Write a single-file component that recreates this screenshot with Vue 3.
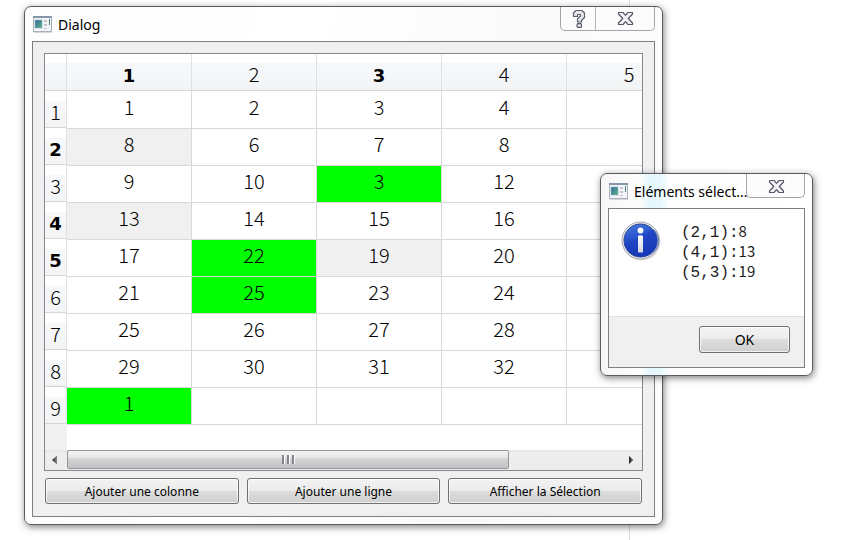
<script setup>
const columns = [
  { label: '1', active: true },
  { label: '2', active: false },
  { label: '3', active: true },
  { label: '4', active: false },
  { label: '5', active: false },
]

const activeRows = [2, 4, 5]
const marked = ['3-3', '5-2', '6-2', '9-1']
const selected = ['2-1', '4-1', '5-3']

const rows = [
  ['1', '2', '3', '4', ''],
  ['8', '6', '7', '8', ''],
  ['9', '10', '3', '12', ''],
  ['13', '14', '15', '16', ''],
  ['17', '22', '19', '20', ''],
  ['21', '25', '23', '24', ''],
  ['25', '26', '27', '28', ''],
  ['29', '30', '31', '32', ''],
  ['1', '', '', '', ''],
]

const picks = [
  { at: '(2,1):', value: '8' },
  { at: '(4,1):', value: '13' },
  { at: '(5,3):', value: '19' },
]

function cellClass(r, c) {
  const key = `${r + 1}-${c + 1}`
  return { marked: marked.includes(key), selected: selected.includes(key) }
}
</script>

<template>
  <main class="desktop">
    <section class="window main-window" aria-labelledby="main-title">
      <header class="titlebar">
        <svg class="app-icon" viewBox="0 0 19 17" aria-hidden="true">
          <rect x="0.5" y="0.5" width="18" height="15" fill="#f4f6f9" stroke="#a9b0bb" />
          <path d="M0 1h19" stroke="#8795ab" stroke-width="2" />
          <rect x="2" y="4" width="7" height="8" fill="url(#screen-a)" stroke="#8fb0c0" stroke-width="0.6" />
          <path d="M11 4h3v2h-3zM11 8h3v2h-3zM11 12h3v1h-3z" fill="#c2c4c8" />
          <path d="M16.5 3v6" stroke="#3f8a78" />
          <path d="M1 16.5h18" stroke="#d5d7da" />
          <defs>
            <linearGradient id="screen-a" x1="0" y1="0" x2="1" y2="1">
              <stop offset="0" stop-color="#35679b" />
              <stop offset="1" stop-color="#58b489" />
            </linearGradient>
          </defs>
        </svg>
        <h1 id="main-title" class="title">Dialog</h1>
        <div class="caption-buttons">
          <button type="button" class="caption help" aria-label="?">
            <svg viewBox="0 0 14 20" width="14" height="20" aria-hidden="true">
              <path d="M1.500 7.500V4L4 1.500h6L12.500 4v4.500L9.500 11.500V13h-4V9.800L8.500 7V5.500h-3v2z" fill="#e6e6e8" stroke="#5d6072" stroke-width="1.200" stroke-linejoin="round" />
              <rect x="5.100" y="14.600" width="4.400" height="3.800" rx="1" fill="#e6e6e8" stroke="#55586b" stroke-width="1.200" />
            </svg>
          </button>
          <button type="button" class="caption close" aria-label="X">
            <svg viewBox="0 0 17 15" width="17" height="15" aria-hidden="true">
              <path d="M1.500 1.500H6L8.500 4.300 11 1.500h4.500V3L11.300 7.500l4.200 4.500v1.500H11L8.500 10.700 6 13.500H1.500V12l4.200-4.500L1.500 3z" fill="#f1f1f2" stroke="#55586b" stroke-width="1.200" stroke-linejoin="round" />
            </svg>
          </button>
        </div>
      </header>

      <div class="client">
        <div class="grid-frame">
          <div class="viewport">
            <table>
              <colgroup>
                <col class="index-col" />
                <col v-for="col in columns" :key="col.label" class="data-col" />
              </colgroup>
              <thead>
                <tr>
                  <td class="corner"></td>
                  <th v-for="col in columns" :key="col.label" scope="col" :class="{ active: col.active }">{{ col.label }}</th>
                </tr>
              </thead>
              <tbody>
                <tr v-for="(row, r) in rows" :key="r">
                  <th scope="row" :class="{ active: activeRows.includes(r + 1) }">{{ r + 1 }}</th>
                  <td v-for="(cell, c) in row" :key="c" :class="cellClass(r, c)">{{ cell }}</td>
                </tr>
              </tbody>
              <tfoot>
                <tr>
                  <td class="rest-index"></td>
                  <td class="rest" colspan="5"></td>
                </tr>
              </tfoot>
            </table>
          </div>
          <div class="scrollbar">
            <button type="button" class="arrow left" aria-label="◄"><span></span></button>
            <div class="track">
              <div class="thumb"><i></i><i></i><i></i></div>
            </div>
            <button type="button" class="arrow right" aria-label="►"><span></span></button>
          </div>
        </div>
        <div class="actions">
          <button type="button" class="push">Ajouter une colonne</button>
          <button type="button" class="push">Ajouter une ligne</button>
          <button type="button" class="push">Afficher la Sélection</button>
        </div>
      </div>
    </section>

    <section class="window message-window" role="dialog" aria-labelledby="message-title">
      <header class="titlebar">
        <svg class="app-icon" viewBox="0 0 19 17" aria-hidden="true">
          <rect x="0.5" y="0.5" width="18" height="15" fill="#f4f6f9" stroke="#a9b0bb" />
          <path d="M0 1h19" stroke="#8795ab" stroke-width="2" />
          <rect x="2" y="4" width="7" height="8" fill="url(#screen-a)" stroke="#8fb0c0" stroke-width="0.6" />
          <path d="M11 4h3v2h-3zM11 8h3v2h-3zM11 12h3v1h-3z" fill="#c2c4c8" />
          <path d="M16.5 3v6" stroke="#3f8a78" />
          <path d="M1 16.5h18" stroke="#d5d7da" />
        </svg>
        <h2 id="message-title" class="title">Eléments sélect...</h2>
        <div class="caption-buttons">
          <button type="button" class="caption close" aria-label="X">
            <svg viewBox="0 0 17 15" width="17" height="15" aria-hidden="true">
              <path d="M1.500 1.500H6L8.500 4.300 11 1.500h4.500V3L11.300 7.500l4.200 4.500v1.500H11L8.500 10.700 6 13.500H1.500V12l4.200-4.500L1.500 3z" fill="#f1f1f2" stroke="#55586b" stroke-width="1.200" stroke-linejoin="round" />
            </svg>
          </button>
        </div>
      </header>
      <div class="message-client">
        <div class="message">
          <svg class="info" viewBox="0 0 40 40" aria-hidden="true">
            <defs>
              <linearGradient id="ball" x1="0" y1="0" x2="0.300" y2="1">
                <stop offset="0" stop-color="#4a7ae0" />
                <stop offset="0.500" stop-color="#2450cc" />
                <stop offset="1" stop-color="#1536b4" />
              </linearGradient>
              <linearGradient id="stem" x1="0" y1="0" x2="0" y2="1">
                <stop offset="0" stop-color="#ffffff" />
                <stop offset="1" stop-color="#d3d6e2" />
              </linearGradient>
            </defs>
            <circle cx="20.500" cy="20.500" r="19" fill="#000" opacity="0.150" />
            <circle cx="19.500" cy="19.500" r="18.500" fill="#e9eaec" stroke="#a3a6ab" />
            <circle cx="19.500" cy="19.500" r="16.500" fill="url(#ball)" stroke="#2b458f" />
            <path d="M3.500 22C10 21 17 18 22 14s9-6 12-5A16 16 0 0 1 19.500 35.500 16 16 0 0 1 3.500 22z" fill="#1a3cbc" opacity="0.450" />
            <circle cx="19.500" cy="9.500" r="2.900" fill="#fff" />
            <rect x="17" y="14.500" width="5" height="17" rx="0.800" fill="url(#stem)" />
          </svg>
          <ul class="picks">
            <li v-for="pick in picks" :key="pick.at"><span class="at">{{ pick.at }}</span><span class="value">{{ pick.value }}</span></li>
          </ul>
        </div>
        <footer class="message-footer">
          <button type="button" class="push ok">OK</button>
        </footer>
      </div>
    </section>
  </main>
</template>

<style>
body {
  margin: 0;
  background: #fff;
}
</style>

<style scoped>
.desktop {
  position: relative;
  box-sizing: border-box;
  min-height: 100vh;
  padding: 6px 183px 15px 24px;
  overflow: hidden;
  background: #fff;
  color: #000;
  font-family: "Noto Sans", "Open Sans", sans-serif;
}

.desktop::before {
  content: "";
  position: absolute;
  top: 0;
  bottom: 0;
  right: 216px;
  width: 1px;
  background: #dcdcdc;
}

button {
  margin: 0;
  padding: 0;
  font-family: inherit;
  color: inherit;
}

.window {
  position: relative;
  box-sizing: border-box;
  padding: 0 7px 7px;
  border: 1px solid #5a5b5d;
  border-radius: 7px;
  background: linear-gradient(100deg, #fdfdfd, #ffffff 40%, #fafafa 70%, #fdfdfd);
  box-shadow: 1px 2px 7px rgba(0, 0, 0, 0.5);
}

.message-window {
  position: absolute;
  top: 173px;
  right: 33px;
  width: 213px;
  background: linear-gradient(90deg, #f6f6f6, #fdfdfd 38px, #e6f8fd 48px, #e6f8fd 60px, #fdfdfd 68px, #ffffff);
}

.titlebar {
  display: flex;
  align-items: center;
  height: 34px;
}

.app-icon {
  flex: none;
  width: 19px;
  height: 17px;
  margin: 0 6px 0 1px;
}

.title {
  flex: 1;
  min-width: 0;
  margin: 2px 0 0;
  font-size: 14px;
  font-weight: 400;
  line-height: 20px;
  white-space: nowrap;
}

.caption-buttons {
  display: flex;
  flex: none;
  align-self: flex-start;
  box-sizing: border-box;
  height: 24px;
  border: 1px solid #a3a5a8;
  border-top: 0;
  border-radius: 0 0 5px 5px;
  background: #fcfcfc;
}

.caption {
  display: flex;
  align-items: center;
  justify-content: center;
  border: 0;
  background: none;
}

.help {
  width: 35px;
  padding-left: 1px;
  border-right: 1px solid #b4b5b8;
}

.close {
  width: 58px;
}

.message-window .close {
  width: 57px;
  padding: 1px 0 0 2px;
}

.client {
  padding: 11px;
  border: 1px solid #7d7f82;
  background: #f0f0f0;
}

.grid-frame {
  border: 1px solid #828790;
  background: #fff;
}

.viewport {
  overflow: hidden;
}

table {
  width: 647px;
  table-layout: fixed;
  border-collapse: separate;
  border-spacing: 0;
  font-family: "Noto Sans CJK JP", "Noto Sans", sans-serif;
  font-size: 20px;
  font-weight: 300;
  line-height: 24px;
  text-align: center;
}

.index-col {
  width: 22px;
}

.data-col {
  width: 125px;
}

th,
td {
  box-sizing: border-box;
  height: 37px;
  padding: 0;
  border: 0 solid #d8d8d8;
  border-right-width: 1px;
  font-weight: 300;
}

thead th,
.corner {
  padding-top: 4px;
  border-color: #dfe1e4;
  border-bottom: 1px solid #d5d5d5;
  background: linear-gradient(#fff 9px, #f7f8fa 9px, #f2f4f6);
}

tbody th {
  padding-top: 6px;
  border-color: #dfe1e4;
  border-bottom: 1px solid #d5d5d5;
  background: linear-gradient(#fff 10px, #f7f8fa 10px, #f2f4f6);
}

th.active {
  padding-top: 7px;
  font-family: "DejaVu Sans", sans-serif;
  font-size: 18px;
  font-weight: 700;
}

tbody td {
  padding-bottom: 6px;
  border-top-width: 1px;
}

tbody tr:first-child td {
  border-top-width: 0;
}

td.selected {
  background: #f0f0f0;
}

td.marked {
  background: #0f0;
}

.rest-index,
.rest {
  height: 26px;
  border-right: 0;
}

.rest-index {
  background: #f0f0f0;
}

.rest {
  border-top-width: 1px;
}

.scrollbar {
  display: flex;
  height: 20px;
  background: linear-gradient(#e3e3e3, #eeeeee 3px, #ececec);
}

.arrow {
  display: flex;
  flex: none;
  align-items: center;
  justify-content: center;
  width: 22px;
  border: 0;
  background: none;
}

.arrow span {
  width: 5px;
  height: 9px;
  background: linear-gradient(90deg, #222, #8a8a8a);
}

.left {
  padding-right: 3px;
}

.left span {
  clip-path: polygon(100% 0, 100% 100%, 0 50%);
}

.right span {
  clip-path: polygon(0 0, 100% 50%, 0 100%);
}

.track {
  flex: 1;
}

.thumb {
  display: flex;
  align-items: center;
  justify-content: center;
  gap: 2px;
  box-sizing: border-box;
  width: 80%;
  height: 19px;
  border: 1px solid #979797;
  border-radius: 2px;
  background: linear-gradient(#f4f4f4, #e6e6e8 40%, #d3d3d5 45%, #c3c3c7);
}

.thumb i {
  width: 2px;
  height: 9px;
  border-right: 1px solid #fff;
  background: #858589;
}

.actions {
  display: flex;
  gap: 8px;
  padding: 7px 1px 1px;
}

.push {
  flex: 1;
  box-sizing: border-box;
  height: 26px;
  padding-top: 1px;
  border: 1px solid #707070;
  border-radius: 3px;
  background: linear-gradient(#f3f3f3, #ebebeb 48%, #dddddd 50%, #cfcfcf);
  box-shadow: inset 0 0 0 1px rgba(255, 255, 255, 0.7);
  font-size: 12px;
  line-height: 16px;
}

.message-client {
  border: 1px solid #7d7f82;
  background: #fff;
}

.message {
  display: flex;
  align-items: flex-start;
  gap: 20px;
  padding: 12px 12px 35px;
}

.info {
  flex: none;
  width: 40px;
  height: 40px;
}

.picks {
  margin: 0;
  padding: 0;
  list-style: none;
  color: #1c1c1c;
  line-height: 20px;
}

.picks li {
  display: flex;
  align-items: baseline;
  height: 20px;
}

.at {
  font-family: "Liberation Mono", monospace;
  font-size: 16px;
}

.value {
  font-family: "Noto Sans CJK JP", "Noto Sans", sans-serif;
  font-size: 15px;
}

.message-footer {
  display: flex;
  justify-content: flex-end;
  padding: 9px 14px 14px;
  border-top: 1px solid #dfdfdf;
  background: #f0f0f0;
}

.ok {
  flex: none;
  width: 91px;
  height: 27px;
  font-size: 14px;
}
</style>
